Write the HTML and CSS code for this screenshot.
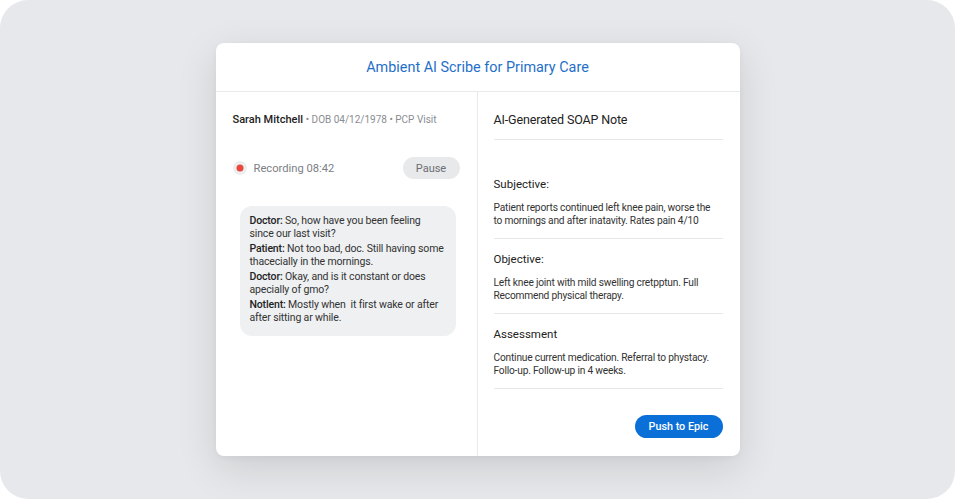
FILE: index.html
```html
<!DOCTYPE html>
<html lang="en">
<head>
    <meta charset="UTF-8">
    <meta name="viewport" content="width=device-width, initial-scale=1.0">
    <title>Ambient AI Scribe</title>
    <link rel="stylesheet" href="styles.css">
</head>
<body>
    <div class="frame">
        <div class="card">
            <div class="card-header">
                <h1 class="title">Ambient AI Scribe for Primary Care</h1>
            </div>
            <div class="card-body">
                <div class="left-col">
                    <p class="patient">
                        <span class="patient-name">Sarah Mitchell</span>
                        <span class="patient-meta"> &bull; DOB 04/12/1978 &bull; PCP Visit</span>
                    </p>
                    <div class="recording-row">
                        <div class="recording">
                            <span class="rec-dot"></span>
                            <span class="rec-text">Recording 08:42</span>
                        </div>
                        <button class="pause-btn">Pause</button>
                    </div>
                    <div class="transcript">
                        <p><b>Doctor:</b> So, how have you been feeling<br>since our last visit?</p>
                        <p><b>Patient:</b> Not too bad, doc. Still having some<br>thacecially in the mornings.</p>
                        <p><b>Doctor:</b> Okay, and is it constant or does<br>apecially of gmo?</p>
                        <p><b>Notlent:</b> Mostly when &nbsp;it first wake or after<br>after sitting ar while.</p>
                    </div>
                </div>
                <div class="right-col">
                    <h2 class="note-title">AI-Generated SOAP Note</h2>
                    <div class="section first">
                        <h3>Subjective:</h3>
                        <p>Patient reports continued left knee pain, worse the<br>to mornings and after inatavity. Rates pain 4/10</p>
                    </div>
                    <div class="section">
                        <h3>Objective:</h3>
                        <p>Left knee joint with mild swelling cretpptun. Full<br>Recommend physical therapy.</p>
                    </div>
                    <div class="section">
                        <h3>Assessment</h3>
                        <p>Continue current medication. Referral to phystacy.<br>Follo-up. Follow-up in 4 weeks.</p>
                    </div>
                    <div class="actions">
                        <button class="push-btn">Push to Epic</button>
                    </div>
                </div>
            </div>
        </div>
    </div>
</body>
</html>
```

FILE: styles.css
```css
body {
    margin: 0;
    background-color: #ffffff;
    font-family: 'Roboto', 'Liberation Sans', sans-serif;
    color: #333;
}

.frame {
    width: 955px;
    height: 499px;
    background-color: #e6e8eb;
    border-radius: 28px;
    display: flex;
    justify-content: center;
    align-items: center;
}

.card {
    width: 524px;
    height: 413px;
    background-color: #fff;
    border-radius: 8px;
    box-shadow: 0 12px 40px rgba(0, 0, 0, 0.12), 0 2px 6px rgba(0, 0, 0, 0.04);
    display: flex;
    flex-direction: column;
    overflow: hidden;
}

.card-header {
    height: 48px;
    border-bottom: 1px solid #e8eaec;
    display: flex;
    align-items: center;
    justify-content: center;
}

.title {
    margin: 0;
    font-size: 14.4px;
    font-weight: 400;
    color: #1f6fc9;
}

.card-body {
    flex: 1;
    display: flex;
}

.left-col {
    width: 262px;
    border-right: 1px solid #e8eaec;
    padding: 20px 17px 0 17px;
    box-sizing: border-box;
}

.patient {
    margin: 0;
    font-size: 11px;
    line-height: 16px;
    white-space: nowrap;
}

.patient-name {
    font-weight: 500;
    color: #222;
}

.patient-meta {
    font-size: 10px;
    color: #8a8d91;
}

.recording-row {
    margin-top: 29px;
    display: flex;
    justify-content: space-between;
    align-items: center;
}

.recording {
    display: flex;
    align-items: center;
    gap: 7px;
}

.rec-dot {
    width: 14px;
    height: 14px;
    border-radius: 50%;
    background-color: #eceef0;
    position: relative;
    display: inline-block;
}

.rec-dot::after {
    content: "";
    position: absolute;
    width: 7px;
    height: 7px;
    border-radius: 50%;
    background-color: #e8483e;
    top: 50%;
    left: 50%;
    transform: translate(-50%, -50%);
}

.rec-text {
    font-size: 11.2px;
    color: #7d8085;
}

.pause-btn {
    font-family: inherit;
    font-size: 11px;
    color: #6b6e73;
    background-color: #e8e9eb;
    border: none;
    border-radius: 11px;
    width: 57px;
    height: 22px;
    padding: 0;
}

.transcript {
    margin: 27px 0 0 7px;
    width: 216px;
    box-sizing: border-box;
    background-color: #eef0f2;
    border-radius: 12px;
    padding: 8px 10px 10px 10px;
}

.transcript p {
    margin: 0 0 2px 0;
    font-size: 10.5px;
    letter-spacing: -0.15px;
    line-height: 13px;
    white-space: nowrap;
    color: #333;
}

.transcript b {
    font-weight: 500;
    color: #222;
}

.right-col {
    flex: 1;
    padding: 20px 17px 0 16px;
    box-sizing: border-box;
}

.note-title {
    margin: 0;
    padding-bottom: 11px;
    border-bottom: 1px solid #e6e8ea;
    font-size: 12.5px;
    letter-spacing: -0.15px;
    line-height: 16px;
    font-weight: 400;
    color: #222;
}

.section {
    padding: 12px 0 11px 0;
    border-bottom: 1px solid #e6e8ea;
}

.section.first {
    padding-top: 36px;
}

.section h3 {
    margin: 0 0 9px 0;
    font-size: 11.5px;
    line-height: 16px;
    font-weight: 400;
    color: #222;
}

.section p {
    margin: 0;
    font-size: 10.2px;
    letter-spacing: -0.2px;
    line-height: 13px;
    white-space: nowrap;
    color: #333;
}

.actions {
    display: flex;
    justify-content: flex-end;
    margin-top: 26px;
}

.push-btn {
    font-family: inherit;
    font-size: 10.8px;
    font-weight: 500;
    color: #fff;
    background-color: #0b6fd8;
    border: none;
    border-radius: 12px;
    width: 88px;
    height: 23px;
    padding: 0;
}
```
